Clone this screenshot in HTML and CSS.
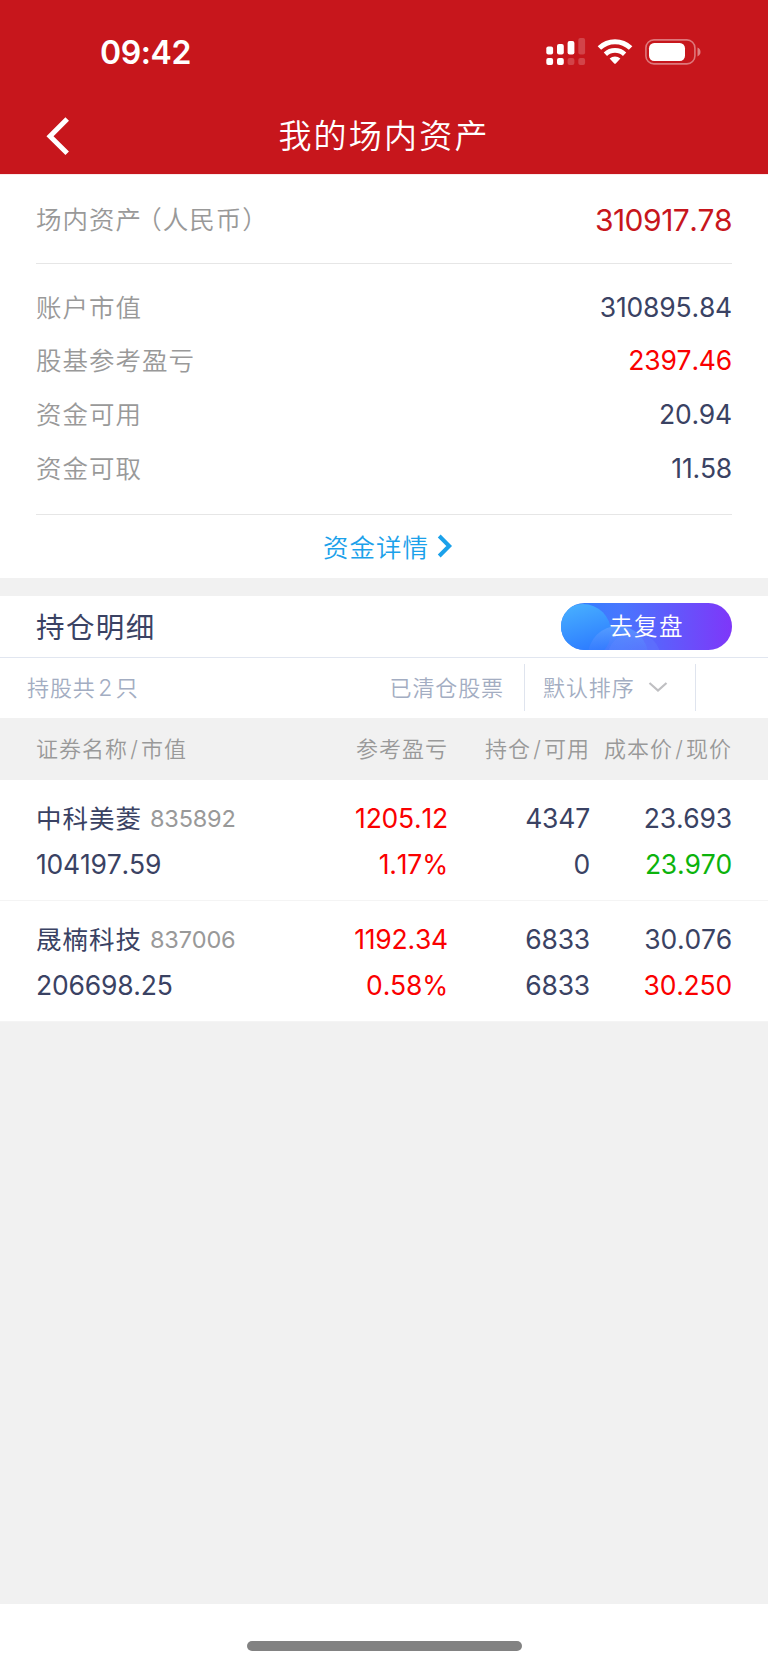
FILE: index.html
```html
<!DOCTYPE html>
<html lang="zh-CN">
<head>
  <meta charset="UTF-8">
  <meta name="viewport" content="width=device-width, initial-scale=1.0">
  <title>我的场内资产</title>
  <link rel="stylesheet" href="styles.css">
</head>
<body>
  <header class="header">
    <div class="status-bar">
      <span class="time">09:42</span>
      <div class="status-icons">
        <svg class="signal" width="40" height="28" viewBox="0 0 40 28" fill="#fff">
          <rect x="0.3" y="8.5" width="6.8" height="8" rx="2"/>
          <rect x="11" y="6" width="6.8" height="10.5" rx="2"/>
          <rect x="21.6" y="3" width="6.8" height="13.5" rx="2"/>
          <rect x="32.3" y="0" width="6.8" height="16.5" rx="2" opacity="0.2"/>
          <rect x="0.3" y="20" width="6.8" height="7" rx="2"/>
          <rect x="11" y="20" width="6.8" height="7" rx="2"/>
          <rect x="21.6" y="20" width="6.8" height="7" rx="2" opacity="0.2"/>
          <rect x="32.3" y="20" width="6.8" height="7" rx="2" opacity="0.2"/>
        </svg>
        <svg class="wifi" width="36" height="26" viewBox="0 0 36 26">
          <path d="M2.4 9 A22.5 22.5 0 0 1 33.6 9" fill="none" stroke="#fff" stroke-width="5"/>
          <path d="M8.4 15.2 A14 14 0 0 1 27.6 15.2" fill="none" stroke="#fff" stroke-width="4.8"/>
          <path d="M12.6 19.6 A8 8 0 0 1 23.4 19.6 L18.8 24.4 Q18 25.2 17.2 24.4 Z" fill="#fff"/>
        </svg>
        <svg class="battery" width="56" height="26" viewBox="0 0 56 26">
          <rect x="0.9" y="0.9" width="49" height="24" rx="8" fill="none" stroke="#fff" stroke-width="1.6" opacity="0.42"/>
          <rect x="4" y="4" width="36" height="18" rx="5.2" fill="#fff"/>
          <path d="M52.5 8.6 Q55.5 10 55.5 13 T52.5 17.4 Z" fill="#fff" opacity="0.45"/>
        </svg>
      </div>
    </div>
    <nav class="nav-bar">
      <svg class="back" width="24" height="40" viewBox="0 0 24 40">
        <path d="M21.2 3 L4 20.3 L21.2 37.2" fill="none" stroke="#fff" stroke-width="5"/>
      </svg>
      <h1 class="title">我的场内资产</h1>
    </nav>
  </header>

  <section class="summary">
    <div class="summary-total">
      <span class="label">场内资产<span class="currency">（人民币）</span></span>
      <span class="total">310917.78</span>
    </div>
    <div class="summary-list">
      <div class="summary-row"><span class="label">账户市值</span><span class="num">310895.84</span></div>
      <div class="summary-row"><span class="label">股基参考盈亏</span><span class="num up">2397.46</span></div>
      <div class="summary-row"><span class="label">资金可用</span><span class="num">20.94</span></div>
      <div class="summary-row"><span class="label">资金可取</span><span class="num">11.58</span></div>
    </div>
    <a class="detail-link">
      <span>资金详情</span>
      <svg width="16" height="24" viewBox="0 0 16 24">
        <path d="M2.2 2 L12.2 12 L2.2 22" fill="none" stroke="#1ba1ea" stroke-width="4"/>
      </svg>
    </a>
  </section>

  <section class="holdings">
    <div class="holdings-head">
      <h2 class="holdings-title">持仓明细</h2>
      <button class="review-btn">
        <svg class="review-bg" width="172" height="47" viewBox="0 0 172 47">
          <defs>
            <linearGradient id="pill" x1="0" x2="1" y1="0" y2="0">
              <stop offset="0" stop-color="#2b82ff"/>
              <stop offset="0.35" stop-color="#4876fe"/>
              <stop offset="1" stop-color="#7f36f9"/>
            </linearGradient>
            <linearGradient id="bubble" x1="0" x2="0.3" y1="0" y2="1">
              <stop offset="0" stop-color="#4ab4ff"/>
              <stop offset="1" stop-color="#2b78ff"/>
            </linearGradient>
            <linearGradient id="bubble2" x1="0" x2="0" y1="0" y2="1">
              <stop offset="0" stop-color="#5fa3ff" stop-opacity="0.75"/>
              <stop offset="0.45" stop-color="#4f80ff" stop-opacity="0.2"/>
            </linearGradient>
          </defs>
          <rect width="172" height="47" fill="url(#pill)"/>
          <circle cx="22" cy="29" r="28" fill="url(#bubble)"/>
          <circle cx="57" cy="53" r="30" fill="url(#bubble2)"/>
          <circle cx="73" cy="56" r="27" fill="#6a8cff" opacity="0.25"/>
        </svg>
        <span>去复盘</span>
      </button>
    </div>

    <div class="filter-bar">
      <span class="count">持股共<span class="count-num">2</span>只</span>
      <span class="cleared">已清仓股票</span>
      <span class="sort">
        <span>默认排序</span>
        <svg width="20" height="12" viewBox="0 0 20 12">
          <path d="M1.5 2 L10 9.5 L18.5 2" fill="none" stroke="#bfbfc2" stroke-width="2.2"/>
        </svg>
      </span>
    </div>

    <div class="grid table-head">
      <span>证券名称<i>/</i>市值</span>
      <span>参考盈亏</span>
      <span>持仓<i>/</i>可用</span>
      <span>成本价<i>/</i>现价</span>
    </div>

    <div class="grid stock">
      <div class="cell"><p><span class="name">中科美菱</span><span class="code">835892</span></p><p>104197.59</p></div>
      <div class="cell up"><p>1205.12</p><p>1.17%</p></div>
      <div class="cell"><p>4347</p><p>0</p></div>
      <div class="cell"><p>23.693</p><p class="down">23.970</p></div>
    </div>
    <div class="grid stock">
      <div class="cell"><p><span class="name">晟楠科技</span><span class="code">837006</span></p><p>206698.25</p></div>
      <div class="cell up"><p>1192.34</p><p>0.58%</p></div>
      <div class="cell"><p>6833</p><p>6833</p></div>
      <div class="cell"><p>30.076</p><p class="up">30.250</p></div>
    </div>
  </section>

  <footer class="home-area">
    <div class="home-indicator"></div>
  </footer>
</body>
</html>
```
FILE: styles.css
```css
* {
  box-sizing: border-box;
}

body {
  display: flex;
  flex-direction: column;
  height: 1665px;
  margin: 0;
  background-color: #f1f1f1;
  color: #3a4263;
  font-family: Inter, "Noto Sans CJK SC", sans-serif;
  font-weight: 370;
  font-kerning: none;
}

h1, h2, p {
  margin: 0;
  font-weight: inherit;
}

/* header */
.header {
  height: 174px;
  background-color: #c7161c;
  color: #fff;
}

.status-bar {
  display: flex;
  justify-content: space-between;
  height: 98px;
  padding: 0 67px 0 100px;
}

.time {
  margin-top: 33px;
  line-height: 40px;
  font-size: 32px;
  font-weight: 570;
  letter-spacing: -0.4px;
}

.status-icons {
  display: flex;
  align-items: flex-start;
  padding-top: 38px;
}

.wifi {
  margin: 1px 12px 0 11.5px;
}

.battery {
  margin-top: 1px;
}

.nav-bar {
  display: grid;
  grid-template-columns: 100px 1fr 100px;
  align-items: center;
  height: 76px;
}

.back {
  margin: -1px 0 0 46px;
}

.title {
  margin-top: -1px;
  font-size: 33px;
  font-weight: 350;
  letter-spacing: 2.2px;
  line-height: 48px;
  text-align: center;
}

/* summary */
.summary {
  height: 404px;
  padding: 0 36px;
  border-top: 1px solid #fbe9ea;
  background-color: #fff;
}

.summary-total,
.summary-row {
  display: flex;
  justify-content: space-between;
  align-items: center;
}

.summary-total {
  height: 89px;
  border-bottom: 1px solid #e6e6e6;
}

.label {
  margin-top: -5px;
  color: #999;
  font-size: 25.5px;
  font-weight: 350;
  letter-spacing: 1px;
}

.summary-total .label {
  margin-top: -3px;
}

/* half-width brackets */
.currency {
  margin-left: 7px;
  font-feature-settings: "halt";
}

.total {
  margin-top: 2px;
  color: #c7161c;
  font-size: 30px;
  letter-spacing: -0.5px;
}

.summary-list {
  height: 251px;
  padding-top: 17px;
  border-bottom: 1px solid #e6e6e6;
}

.summary-row {
  height: 53.6px;
}

.num {
  margin-top: -2px;
  font-size: 26.5px;
  letter-spacing: -0.2px;
}

.up {
  color: #fa0000;
}

.down {
  color: #0cb30c;
}

.detail-link {
  display: flex;
  justify-content: center;
  align-items: center;
  gap: 8px;
  height: 63px;
  padding: 0 0 2px 8px;
  color: #1ba1ea;
  font-size: 25.5px;
  font-weight: 350;
  letter-spacing: 1px;
}

/* holdings */
.holdings {
  margin-top: 17.5px;
  background-color: #fff;
}

.holdings-head {
  display: flex;
  justify-content: space-between;
  align-items: center;
  height: 62px;
  padding: 0 36px;
  border-bottom: 1px solid #e1e6f0;
}

.holdings-title {
  margin-top: -1px;
  font-size: 28.5px;
  letter-spacing: 1.4px;
}

.review-btn {
  position: relative;
  width: 171px;
  height: 47px;
  padding: 0 0 2px;
  border: 0;
  border-radius: 24px;
  overflow: hidden;
  color: #fff;
  font-family: inherit;
  font-size: 23.5px;
  font-weight: 350;
  letter-spacing: 1.3px;
}

.review-bg {
  position: absolute;
  top: 0;
  left: 0;
}

.review-btn span {
  position: relative;
}

.filter-bar {
  display: flex;
  align-items: center;
  height: 60px;
  padding-left: 27px;
  color: #a3adc2;
  font-size: 22px;
  font-weight: 350;
  letter-spacing: 0.9px;
}

.count {
  flex: 1;
  margin-top: -4px;
}

.count-num {
  margin: 0 2.5px;
  font-size: 23px;
}

.cleared {
  margin: -4px 20px 0 0;
}

.sort {
  display: flex;
  align-items: center;
  gap: 13px;
  width: 172px;
  height: 47px;
  margin: 0 72px 0 0;
  padding: 0 0 4px 18px;
  border-left: 1px solid #dfe4ee;
  border-right: 1px solid #dfe4ee;
}

.sort svg {
  margin-top: 2px;
}

.grid {
  display: grid;
  grid-template-columns: 250px 162px 142px 142px;
  padding: 0 36px;
  text-align: right;
}

.grid > :first-child {
  text-align: left;
}

.table-head {
  align-items: center;
  height: 62px;
  padding-bottom: 4px;
  background-color: #f1f1f1;
  color: #999;
  font-size: 22px;
  font-weight: 350;
  letter-spacing: 1px;
}

.table-head i {
  margin: 0 2.2px;
  font-style: normal;
}

.stock {
  height: 121.2px;
  padding-top: 15px;
  border-bottom: 1px solid #f4f4f4;
}

.cell p {
  height: 46.5px;
  line-height: 46.5px;
  font-size: 26.5px;
  letter-spacing: -0.2px;
  white-space: nowrap;
}

.cell .name {
  font-size: 25.5px;
  letter-spacing: 1px;
}

.code {
  position: relative;
  top: -1px;
  margin-left: 8px;
  color: #999;
  font-size: 23.5px;
}

/* bottom */
.home-area {
  display: flex;
  justify-content: center;
  height: 61px;
  margin-top: auto;
  padding-top: 37px;
  background-color: #fff;
}

.home-indicator {
  width: 275px;
  height: 10px;
  border-radius: 5px;
  background-color: #828282;
}
```
